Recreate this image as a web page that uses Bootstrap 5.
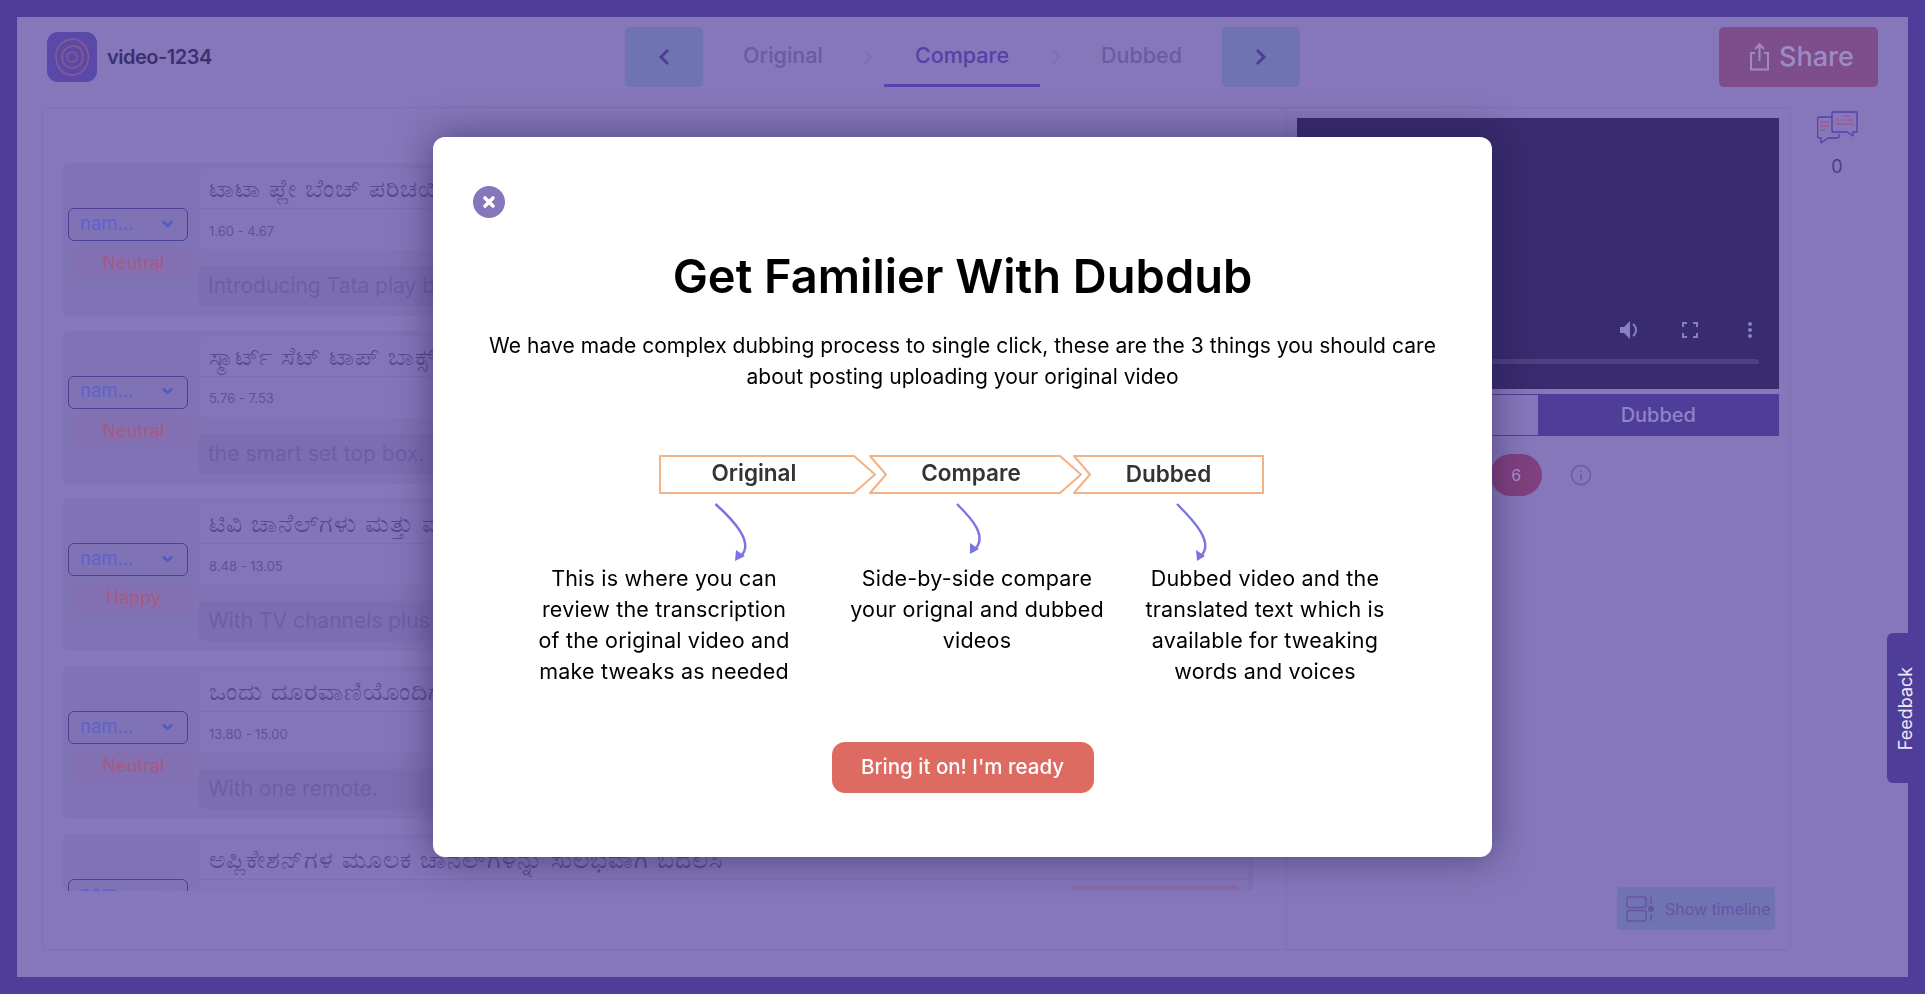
<!DOCTYPE html>
<html>
<head>
  <title>video-1234</title>
  <link href="https://cdn.jsdelivr.net/npm/bootstrap@5.3.3/dist/css/bootstrap.min.css" rel="stylesheet">
  <style>
    html, body { height: 100%; overflow: hidden; }
    body { font-family: Inter, "Noto Sans", "Noto Sans CJK SC", sans-serif; background: #8577ba; }
    .page-frame { height: 994px; border: 17px solid #4f3d9a; background: #8577ba; }

    .top-bar { height: 90px; padding: 10px 30px 3px; }
    .top-side { flex: 1 1 0; height: 60px; }
    .app-logo { width: 50px; height: 50px; border-radius: 11px; background: #5a49a9; }
    .app-name { font-size: 20px; font-weight: 600; letter-spacing: -.5px; color: #3c2f72; margin-left: 10px; }
    .step-arrow { width: 78px; height: 60px; background: #7073b1; border-radius: 5px; }
    .step-tab { width: 139px; height: 60px; font-size: 21.500px; font-weight: 500; color: #6a5aa5; border-bottom: 3px solid transparent; }
    .step-tab.first { width: 138px; }
    .step-tab.on { width: 156px; color: #5540a8; border-bottom-color: #5a3fae; }
    .step-row { gap: 11px; }
    .share-btn { width: 159px; height: 60px; background: #7e4e8c; border-radius: 5px; color: #9c8cc4; font-size: 27px; font-weight: 500; gap: 9px; }
    .share-btn svg { margin-left: 6px; }

    .work-area { height: 843px; margin-left: 25px; }
    .work-card { width: 1749px; height: 843px; background: transparent; border: 1px solid #7d6fb3; border-radius: 4px; }
    .left-pane { width: 1245px; padding: 55px 33px 0 20px; border-right: 1px solid #7d6fb3; }
    .seg-list { height: 728px; overflow: hidden; }
    .seg-row { height: 153px; margin-bottom: 14.7px; background: #7f72b5; border-radius: 6px; padding: 5px 5px 0 5px; }
    .seg-left { width: 131px; padding-top: 40px; }
    .spk-box { width: 120px; height: 33px; border: 1px solid #4f3d9a; border-radius: 6px; padding: 0 14px 2px 11px; color: #5b63cf; font-size: 18.500px; }
    .mood-tag { width: 119px; height: 30px; margin: 7px 0 0 6px; line-height: 30px; text-align: center; color: #a85a80; font-size: 18px; background: #8270b2; border-radius: 4px; }
    .seg-right { width: 1049px; }
    .seg-source { height: 82px; border-radius: 6px; background: #8475b9; }
    .seg-kn { height: 41px; line-height: 40px; padding: 0 10px; font-size: 25px; letter-spacing: 1px; font-weight: 300; color: #574893; border-bottom: 1px solid #7d6fb3; white-space: nowrap; overflow: hidden; }
    .seg-time { height: 41px; padding: 4px 0 0 10px; font-size: 13px; color: #5f5199; }
    .emo-pill { width: 166px; height: 30px; margin: -4px 10px 0 0; background: #8a6cac; border-radius: 4px; }
    .seg-target { height: 40px; margin-top: 16px; line-height: 40px; padding: 0 9px; background: #7b6db0; border-radius: 5px; font-size: 21px; color: #6c5ea6; }

    .right-pane { width: 503px; padding: 10px 0 0 10px; position: relative; }
    .video-box { width: 482px; height: 271px; background: #382b6e; position: relative; }
    .video-ctl { position: absolute; }
    .video-track { left: 20px; right: 20px; bottom: 25px; height: 5px; border-radius: 3px; background: #4d4082; }
    .view-tabs { width: 482px; height: 42px; margin-top: 5px; border: 1px solid #4f3d9a; }
    .view-tab { flex: 1 1 0; font-size: 20px; font-weight: 500; color: #8f84c4; }
    .view-tab.on { background: #4f3d9a; }
    .count-row { width: 482px; height: 42px; margin-top: 18px; padding-left: 193px; gap: 28px; }
    .count-pill { width: 52px; height: 42px; background: #81407f; border-radius: 21px; color: #a98fc8; font-size: 16px; }
    .timeline-btn { position: absolute; right: 15px; bottom: 19px; width: 158px; height: 43px; background: #7073b1; border-radius: 4px; color: #6654a4; font-size: 16px; gap: 11px; white-space: nowrap; }

    .side-rail { width: 117px; padding: 4px 0 0 26px; }
    .rail-count { width: 40px; margin-top: 9px; text-align: center; font-size: 18px; color: #4a3d86; }

    .feedback-tab { position: fixed; right: 0; top: 633px; width: 38px; height: 150px; background: #4f3d9a; border-radius: 6px 0 0 6px; }
    .feedback-tab span { transform: rotate(-90deg); color: #ebe8f5; font-size: 18px; white-space: nowrap; }

    .dim-layer { position: fixed; top: 0; left: 0; width: 100%; height: 100%; }
    .intro-box { width: 1059px; height: 720px; background: #fff; border: 0; border-radius: 12px; box-shadow: 0 0 38px rgba(35,25,70,.55); color: #000; }
    .intro-close { width: 32px; height: 32px; margin: 49px 0 0 40px; background: #8577ba; border: 0; border-radius: 50%; padding: 0; }
    .intro-title { font-size: 47px; line-height: 56px; font-weight: 600; margin: 30px 0 0; }
    .intro-text { width: 1000px; font-size: 21px; line-height: 31px; letter-spacing: .05px; margin: 26px auto 0; }
    .intro-steps { display: block; margin: 59px 0 0 217px; }
    .intro-steps text { font-family: Inter, sans-serif; font-size: 22.500px; font-weight: 600; fill: #333; text-anchor: middle; }
    .how-row { margin-left: 91px; }
    .how-col { width: 280px; font-size: 21.500px; line-height: 31px; letter-spacing: .2px; text-align: center; }
    .how-col.mid { margin-left: 33px; }
    .how-col.last { margin-left: 8px; }
    .ready-btn { width: 262px; height: 51px; margin: 55px auto 0; background: #de6b62; border: 0; border-radius: 13px; color: #fff; font-size: 20.500px; font-weight: 500; }
  </style>
</head>

<body>
  <div class="page-frame">
    <!-- top bar -->
    <div class="top-bar d-flex align-items-start">
      <div class="top-side d-flex align-items-center">
        <div class="app-logo d-flex align-items-center justify-content-center">
          <svg width="40" height="42" viewBox="0 0 40 42" fill="none" stroke="#85588f" stroke-width="1.800">
            <path d="M20 3C26 2 34 8 36 17C38 26 33 37 22 39C12 40 5 33 4 22C3 12 10 4 20 3Z"/>
            <path d="M20 10C27 9 31 15 30.500 21C31 28 26 32 20 32C14 32 10 27 10 21C10 15 14 11 20 10Z"/>
            <circle cx="20" cy="21" r="5"/>
          </svg>
        </div>
        <div class="app-name">video-1234</div>
      </div>

      <div class="step-row d-flex align-items-center">
        <button class="btn step-arrow d-flex align-items-center justify-content-center p-0">
          <svg width="12" height="18" viewBox="0 0 12 18" fill="none" stroke="#4f3d9a" stroke-width="3"><path d="M10 2L3 9l7 7"/></svg>
        </button>
        <div class="step-tab first d-flex align-items-center justify-content-center">Original</div>
        <svg width="10" height="14" viewBox="0 0 10 14" fill="none" stroke="#7b6cb0" stroke-width="1.600"><path d="M2 1l6 6-6 6"/></svg>
        <div class="step-tab on d-flex align-items-center justify-content-center">Compare</div>
        <svg width="10" height="14" viewBox="0 0 10 14" fill="none" stroke="#7b6cb0" stroke-width="1.600"><path d="M2 1l6 6-6 6"/></svg>
        <div class="step-tab d-flex align-items-center justify-content-center">Dubbed</div>
        <button class="btn step-arrow d-flex align-items-center justify-content-center p-0">
          <svg width="12" height="18" viewBox="0 0 12 18" fill="none" stroke="#4f3d9a" stroke-width="3"><path d="M2 2l7 7-7 7"/></svg>
        </button>
      </div>

      <div class="top-side d-flex justify-content-end">
        <button class="btn share-btn d-flex align-items-center justify-content-center p-0">
          <svg width="21" height="28" viewBox="0 0 21 28" fill="none" stroke="#9c8cc4" stroke-width="2"><path d="M6 10H2v16.500h17V10h-4"/><path d="M10.500 18V2M6 6l4.500-4.500L15 6"/></svg>
          Share
        </button>
      </div>
    </div>

    <!-- work area -->
    <div class="work-area d-flex">
      <div class="card work-card flex-row">
        <div class="left-pane">
          <div class="seg-list" id="segList"></div>
        </div>
        <div class="right-pane">
          <div class="video-box">
            <svg class="video-ctl" style="left:322px;top:201px" width="22" height="22" viewBox="0 0 22 22" fill="#8a7fc0"><path d="M1 8v6h4l6 6V2L5 8z"/><path d="M14 5c4 3 4 9 0 12" fill="none" stroke="#8a7fc0" stroke-width="2"/></svg>
            <svg class="video-ctl" style="left:385px;top:204px" width="16" height="16" viewBox="0 0 16 16" fill="none" stroke="#8a7fc0" stroke-width="2"><path d="M1 5V1h4M11 1h4v4M15 11v4h-4M5 15H1v-4"/></svg>
            <svg class="video-ctl" style="left:450px;top:203px" width="6" height="18" viewBox="0 0 6 18" fill="#8a7fc0"><circle cx="3" cy="3" r="2"/><circle cx="3" cy="9" r="2"/><circle cx="3" cy="15" r="2"/></svg>
            <div class="video-ctl video-track"></div>
          </div>
          <div class="view-tabs d-flex">
            <div class="view-tab d-flex align-items-center justify-content-center">Original</div>
            <div class="view-tab on d-flex align-items-center justify-content-center">Dubbed</div>
          </div>
          <div class="count-row d-flex align-items-center">
            <div class="count-pill d-flex align-items-center justify-content-center">6</div>
            <svg width="22" height="22" viewBox="0 0 22 22" fill="none" stroke="#6a5aa5" stroke-width="1.500"><circle cx="11" cy="11" r="9.500"/><path d="M11 10v6M11 6v1.800"/></svg>
          </div>
          <button class="btn timeline-btn d-flex align-items-center p-0 ps-2">
            <svg width="28" height="26" viewBox="0 0 28 26" fill="none" stroke="#6654a4" stroke-width="1.500"><rect x="1" y="1" width="19" height="10.500" rx="2"/><rect x="1" y="14.500" width="19" height="10.500" rx="2"/><path d="M25 1v7M25 18v7"/><circle cx="25" cy="13" r="3" fill="#6654a4" stroke="none"/></svg>
            Show timeline
          </button>
        </div>
      </div>

      <div class="side-rail">
        <svg width="41" height="33" viewBox="0 0 41 33" fill="none" stroke="#5540a8" stroke-width="1.300" stroke-linejoin="round">
          <path d="M15 6H2.500a2 2 0 0 0-2 2v17a2 2 0 0 0 2 2H4v5l7-5h9a2 2 0 0 0 2-2v-2"/>
          <path d="M15 1h25v20h-4v4l-6-4H15z"/>
          <path d="M26 5h7M19 9h3M24 9h3M29 9h7M19 13h18M3 11h9M3 15h9M3 19h5" stroke="#a05a94"/>
        </svg>
        <div class="rail-count">0</div>
      </div>
    </div>
  </div>

  <div class="feedback-tab d-flex align-items-center justify-content-center"><span>Feedback</span></div>

  <!-- intro dialog -->
  <div class="dim-layer d-flex align-items-center justify-content-center">
    <div class="modal-content intro-box">
      <button class="intro-close d-flex align-items-center justify-content-center">
        <svg width="14" height="14" viewBox="0 0 14 14" stroke="#fff" stroke-width="3.600" stroke-linecap="round"><path d="M3 3l8 8M11 3l-8 8"/></svg>
      </button>
      <h1 class="intro-title text-center">Get Familier With Dubdub</h1>
      <p class="intro-text text-center">We have made complex dubbing process to single click, these are the 3 things you should care<br>about posting uploading your original video</p>

      <svg class="intro-steps" width="620" height="112" viewBox="0 0 620 112" fill="none">
        <g stroke="#f4b183" stroke-width="2" stroke-linejoin="round">
          <path d="M10 5H204L225 23.500L204 42H10Z"/>
          <path d="M220 5H410L431 23.500L410 42H220L236 23.500Z"/>
          <path d="M424 5H613V42H424L440 23.500Z"/>
        </g>
        <text x="104" y="30">Original</text>
        <text x="321" y="30">Compare</text>
        <text x="518.500" y="31">Dubbed</text>
        <g stroke="#7b73e0" stroke-width="2.400">
          <path d="M65.500 53C82 68 106 92 90 106"/>
          <path d="M307 53C320 66 340 86 323 100"/>
          <path d="M527 53C542 68 566 92 550 106"/>
        </g>
        <g fill="#7b73e0">
          <path d="M85 110L86 99L95 105Z"/>
          <path d="M320 103L320 92L329 98Z"/>
          <path d="M547 110L546 99L555 105Z"/>
        </g>
      </svg>

      <div class="how-row d-flex">
        <div class="how-col">This is where you can<br>review the transcription<br>of the original video and<br>make tweaks as needed</div>
        <div class="how-col mid">Side-by-side compare<br>your orignal and dubbed<br>videos</div>
        <div class="how-col last">Dubbed video and the<br>translated text which is<br>available for tweaking<br>words and voices</div>
      </div>

      <button class="btn ready-btn d-block">Bring it on! I'm ready</button>
    </div>
  </div>

  <script src="https://cdn.jsdelivr.net/npm/bootstrap@5.3.3/dist/js/bootstrap.bundle.min.js"></script>
  <script>
    const segmentos = [
      { kn: 'ಟಾಟಾ ಪ್ಲೇ ಬೆಂಚ್ ಪರಿಚಯಿಸುತ್ತಿದೆ', time: '1.60 - 4.67', mood: 'Neutral', en: 'Introducing Tata play binge' },
      { kn: 'ಸ್ಮಾರ್ಟ್ ಸೆಟ್ ಟಾಪ್ ಬಾಕ್ಸ್', time: '5.76 - 7.53', mood: 'Neutral', en: 'the smart set top box.' },
      { kn: 'ಟಿವಿ ಚಾನೆಲ್‌ಗಳು ಮತ್ತು ಮನರಂಜನೆ', time: '8.48 - 13.05', mood: 'Happy', en: 'With TV channels plus apps' },
      { kn: 'ಒಂದು ದೂರವಾಣಿಯೊಂದಿಗೆ', time: '13.80 - 15.00', mood: 'Neutral', en: 'With one remote.' },
      { kn: 'ಅಪ್ಲಿಕೇಶನ್‌ಗಳ ಮೂಲಕ ಚಾನಲ್‌ಗಳನ್ನು ಸುಲಭವಾಗಿ ಬದಲಿಸಿ', time: '16.10 - 19.40', mood: 'Neutral', en: 'Switch channels through apps easily' }
    ];
    const lista = document.getElementById('segList');
    segmentos.forEach(seg => {
      const row = document.createElement('div');
      row.className = 'seg-row d-flex';
      row.innerHTML = `
        <div class="seg-left">
          <div class="spk-box d-flex align-items-center justify-content-between">
            <span>nam...</span>
            <svg width="11" height="8" viewBox="0 0 11 8" fill="none" stroke="#4f5ac4" stroke-width="2.500"><path d="M1 1.500l4.500 4.500L10 1.500"/></svg>
          </div>
          <div class="mood-tag">${seg.mood}</div>
        </div>
        <div class="seg-right">
          <div class="seg-source">
            <div class="seg-kn">${seg.kn}</div>
            <div class="seg-time d-flex align-items-center justify-content-between">
              <span>${seg.time}</span>
              <div class="emo-pill"></div>
            </div>
          </div>
          <div class="seg-target">${seg.en}</div>
        </div>`;
      lista.appendChild(row);
    });
  </script>
</body>
</html>
